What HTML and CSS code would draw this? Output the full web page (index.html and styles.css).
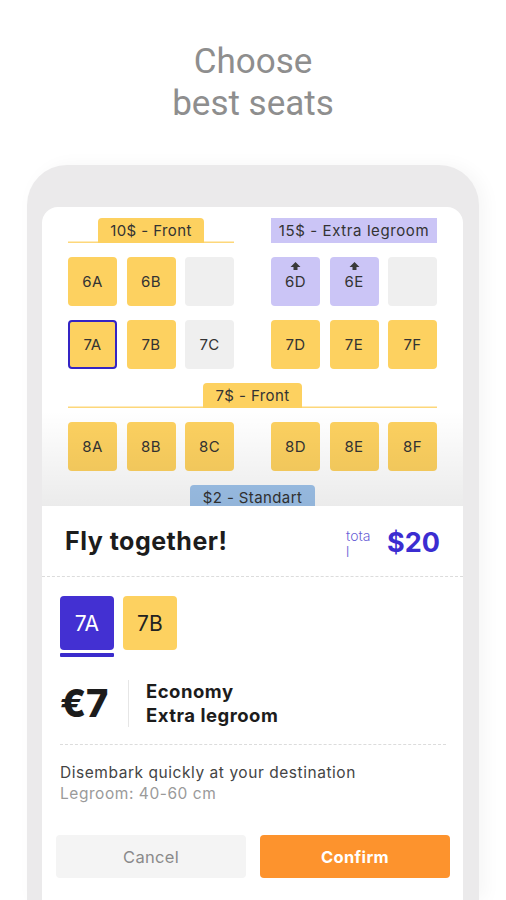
FILE: index.html
```html
<!DOCTYPE html>
<html>
<head>
<meta charset="utf-8">
<link rel="stylesheet" href="styles.css">
</head>
<body>
<h1 class="title">Choose<br>best seats</h1>
<div class="frame">
  <div class="screen">
    <div class="map">
      <div class="deck">
        <div class="group">
          <div class="tagrow line-yellow"><span class="tag yellow">10$ - Front</span></div>
          <div class="seats">
            <div class="seat y">6A</div><div class="seat y">6B</div><div class="seat g"></div>
            <div class="seat y sel">7A</div><div class="seat y">7B</div><div class="seat g">7C</div>
          </div>
        </div>
        <div class="group">
          <div class="tagrow line-purple"><span class="tag purple full">15$ - Extra legroom</span></div>
          <div class="seats">
            <div class="seat p"><svg class="arrow" viewBox="0 0 10 8"><path d="M5 0L10 5H7V8H3V5H0Z" fill="#3a3a3a"/></svg>6D</div>
            <div class="seat p"><svg class="arrow" viewBox="0 0 10 8"><path d="M5 0L10 5H7V8H3V5H0Z" fill="#3a3a3a"/></svg>6E</div>
            <div class="seat g"></div>
            <div class="seat y">7D</div><div class="seat y">7E</div><div class="seat y">7F</div>
          </div>
        </div>
      </div>
      <div class="tagrow line-yellow wide"><span class="tag yellow">7$ - Front</span></div>
      <div class="deck">
        <div class="seats"><div class="seat y">8A</div><div class="seat y">8B</div><div class="seat y">8C</div></div>
        <div class="seats"><div class="seat y">8D</div><div class="seat y">8E</div><div class="seat y">8F</div></div>
      </div>
      <div class="tagrow wide"><span class="tag blue">$2 - Standart</span></div>
    </div>
    <div class="sheet">
      <div class="sheet-head">
        <div class="fly">Fly together!</div>
        <div class="total"><span class="total-label">tota l</span><span class="total-sum">$20</span></div>
      </div>
      <div class="chips">
        <div class="chip-col"><div class="chip active">7A</div><div class="chip-bar"></div></div>
        <div class="chip-col"><div class="chip">7B</div></div>
      </div>
      <div class="price-row">
        <div class="price">€7</div>
        <div class="vdiv"></div>
        <div class="cls">Economy<br>Extra legroom</div>
      </div>
      <div class="desc">
        <div class="d1">Disembark quickly at your destination</div>
        <div class="d2">Legroom: 40-60 cm</div>
      </div>
      <div class="buttons">
        <button class="btn cancel">Cancel</button>
        <button class="btn confirm">Confirm</button>
      </div>
    </div>
  </div>
</div>
</body>
</html>
```

FILE: styles.css
```css
* { box-sizing: border-box; }
html, body { margin: 0; padding: 0; background: #fff; }
body { width: 506px; height: 900px; overflow: hidden; font-family: "Inter", "Open Sans", sans-serif; color: #2b2b2b; }

.title {
  margin: 41px 0 0;
  text-align: center;
  font-family: Roboto, sans-serif;
  font-weight: 400;
  font-size: 35px;
  line-height: 42px;
  color: #8e8e8e;
}

.frame {
  margin: 40px 0 0 27px;
  width: 452px;
  height: 735px;
  background: #ebeaeb;
  border-radius: 40px 40px 0 0;
  padding: 42px 16px 0 15px;
  box-shadow: 6px 0 18px rgba(0,0,0,0.04);
}

.screen {
  background: #fff;
  border-radius: 16px 16px 0 0;
  height: 100%;
  display: flex;
  flex-direction: column;
  overflow: hidden;
}

.map {
  position: relative;
  height: 299px;
  overflow: hidden;
  padding: 11px 26px 0 26px;
  display: flex;
  flex-direction: column;
  gap: 14px;
}
.map::after {
  content: "";
  position: absolute;
  left: 0; right: 0; bottom: 0;
  height: 95px;
  background: linear-gradient(to bottom, rgba(0,0,0,0), rgba(0,0,0,0.08));
  pointer-events: none;
}

.deck { display: flex; justify-content: space-between; }
.group { display: flex; flex-direction: column; gap: 14px; width: 166px; }

.tagrow { display: flex; justify-content: center; }
.line-yellow { box-shadow: inset 0 -1.5px 0 #fdd77a; }
.line-purple { box-shadow: inset 0 -1.5px 0 #cbc5f6; }
.wide { width: 369px; }

.tag {
  height: 25px;
  display: flex;
  align-items: center;
  justify-content: center;
  padding: 0 12px;
  font-size: 15px;
  letter-spacing: 0.4px;
  color: #333;
  border-radius: 4px 4px 0 0;
  white-space: nowrap;
}
.tag.yellow { background: #fdd160; }
.tag.purple { background: #cbc5f6; border-radius: 0; letter-spacing: 0.6px; }
.tag.full { width: 100%; }
.tag.blue { background: #9fc4ec; padding: 0 13px; height: 24px; }

.seats {
  display: grid;
  grid-template-columns: repeat(3, 49px);
  grid-auto-rows: 49px;
  column-gap: 9.5px;
  row-gap: 14px;
}
.seat {
  position: relative;
  border-radius: 4px;
  display: flex;
  align-items: center;
  justify-content: center;
  font-size: 15px;
  letter-spacing: 0.4px;
  color: #333;
}
.seat.y { background: #fdd160; }
.seat.p { background: #cbc5f6; }
.seat.g { background: #efefef; }
.seat.sel { border: 2px solid #3424c4; }
.arrow {
  position: absolute;
  top: 5px;
  left: 50%;
  margin-left: -5.5px;
  width: 11px;
  height: 8px;
}

.sheet {
  flex: 1;
  background: #fff;
  border-radius: 16px 16px 0 0;
  display: flex;
  flex-direction: column;
}

.sheet-head {
  height: 71px;
  padding: 0 23px;
  display: flex;
  align-items: center;
  justify-content: space-between;
  border-bottom: 1px dashed #dcdcdc;
}
.fly { font-size: 25px; font-weight: 700; color: #1c1c1c; letter-spacing: 0.5px; }
.total { display: flex; align-items: center; gap: 10px; margin-top: 2px; }
.total-label {
  width: 31px;
  font-size: 14px;
  line-height: 16px;
  color: #6a5fd6;
  font-weight: 300;
  word-break: break-all;
  margin-top: 4px;
}
.total-sum { font-size: 27px; font-weight: 700; color: #3b2dd1; }

.chips { display: flex; gap: 9px; padding: 19px 0 0 18px; }
.chip-col { display: flex; flex-direction: column; gap: 3px; }
.chip {
  width: 54px; height: 54px;
  border-radius: 4px;
  background: #fdd160;
  display: flex; align-items: center; justify-content: center;
  font-size: 21px;
  letter-spacing: 0.3px;
  color: #222;
}
.chip.active { background: #4330d2; color: #fff; }
.chip-bar { height: 4px; background: #3a2bcc; border-radius: 1px; }

.price-row {
  margin: 22px 17px 0 18px;
  display: flex;
  align-items: center;
  padding-bottom: 17px;
  border-bottom: 1px dashed #dcdcdc;
}
.price { font-size: 38px; font-weight: 800; color: #1c1c1c; width: 68px; letter-spacing: -0.3px; }
.vdiv { width: 1px; height: 47px; background: #e6e6e6; }
.cls { padding-left: 17px; font-size: 18.5px; line-height: 24px; font-weight: 700; color: #1c1c1c; letter-spacing: 0.5px; }

.desc { padding: 17px 18px 0 18px; font-size: 15.5px; line-height: 21px; letter-spacing: 0.55px; }
.d1 { color: #444; }
.d2 { color: #9a9a9a; }

.buttons { display: flex; gap: 14px; padding: 31px 13px 0 14px; }
.btn {
  flex: 1;
  height: 43px;
  border: none;
  border-radius: 4px;
  font-family: inherit;
  font-size: 16.5px;
  letter-spacing: 0.3px;
}
.cancel { background: #f4f4f4; color: #8a8a8a; }
.confirm { background: #fd932d; color: #fff; font-weight: 700; }
```
